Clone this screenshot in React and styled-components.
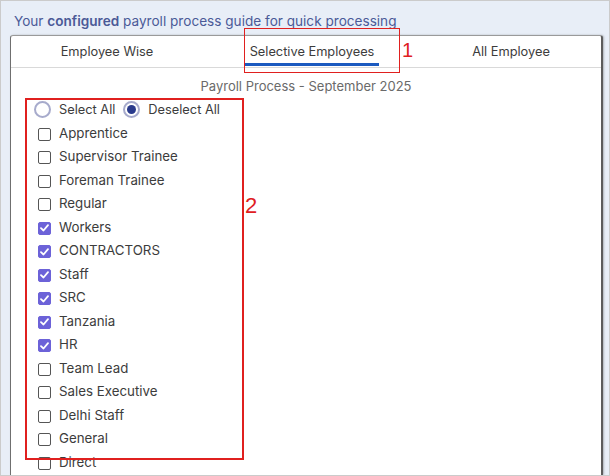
import React from 'react';
import styled, { createGlobalStyle } from 'styled-components';

const GlobalStyle = createGlobalStyle`
  html, body {
    margin: 0;
    padding: 0;
  }
  body {
    font-family: Inter, "Noto Sans", sans-serif;
    background: #e8eef7;
  }
`;

const Frame = styled.div`
  position: relative;
  box-sizing: border-box;
  width: 610px;
  height: 476px;
  border: 1px solid #cbcbcb;
  overflow: hidden;
  padding: 11px 6px 0 9px;
  display: flex;
  flex-direction: column;
`;

const Heading = styled.div`
  font-size: 13.6px;
  color: #4b5a97;
  padding-left: 4px;
  height: 23px;
  line-height: 18px;

  b {
    font-weight: 600;
  }
`;

const Panel = styled.div`
  flex: 1;
  background: #fff;
  border-top: 1px solid #9a9a9a;
  border-left: 1px solid #6f6f6f;
  border-right: 2px solid #5c5c5c;
  border-radius: 3px 3px 0 0;
  box-shadow: 1px 0 2px rgba(0, 0, 0, 0.25);
  display: flex;
  flex-direction: column;
`;

const Tabs = styled.div`
  display: grid;
  grid-template-columns: 192px 218px 1fr;
  height: 31px;
  border-bottom: 1px solid #d9d9d9;
`;

const Tab = styled.div`
  display: flex;
  justify-content: center;
  align-items: flex-end;
  font-size: 12.8px;
  color: #3c3c3c;
`;

const TabLabel = styled.span`
  display: inline-block;
  padding: 0 5px;
  height: 25px;
  line-height: 22px;
  border-bottom: 3px solid ${(p) => (p.$active ? '#1b5ac0' : 'transparent')};
  box-sizing: border-box;
  margin-bottom: 1px;
`;

const Body = styled.div`
  display: flex;
  flex-direction: column;
  padding: 9px 0 0 27px;
`;

const Title = styled.div`
  text-align: center;
  font-size: 13px;
  color: #6a6a6a;
  margin-left: -27px;
  height: 20px;
  line-height: 18px;
`;

const RadioRow = styled.div`
  display: flex;
  align-items: center;
  gap: 8px;
  height: 24px;
  margin-left: -4px;
`;

const RadioOption = styled.label`
  display: flex;
  align-items: center;
  gap: 8px;
  font-size: 12.8px;
  color: #3c3c3c;
`;

const RadioCircle = styled.span`
  width: 17px;
  height: 17px;
  box-sizing: border-box;
  border-radius: 50%;
  border: 2px solid #a7abcc;
  display: flex;
  align-items: center;
  justify-content: center;

  &::after {
    content: '';
    width: 9px;
    height: 9px;
    border-radius: 50%;
    background: ${(p) => (p.$on ? '#2a3b8c' : 'transparent')};
  }
`;

const List = styled.div`
  display: flex;
  flex-direction: column;
`;

const Row = styled.label`
  display: flex;
  align-items: center;
  gap: 8px;
  height: 23.5px;
  font-size: 13.3px;
  color: #3c3c3c;
`;

const Box = styled.span`
  width: 13px;
  height: 13px;
  box-sizing: border-box;
  border-radius: 2px;
  border: 1px solid ${(p) => (p.$on ? '#6c62d8' : '#555')};
  background: ${(p) => (p.$on ? '#6c62d8' : '#fff')};
  display: flex;
  align-items: center;
  justify-content: center;
  margin-top: 3px;
`;

const Mark = styled.span`
  position: absolute;
  border: ${(p) => p.$w || 1}px solid #e0201f;
  box-sizing: border-box;
  pointer-events: none;
`;

const MarkNum = styled.span`
  position: absolute;
  color: #e0201f;
  font-family: "Liberation Sans", Arial, sans-serif;
  font-size: ${(p) => p.$size}px;
  line-height: 1;
`;

const items = [
  ['Apprentice', false],
  ['Supervisor Trainee', false],
  ['Foreman Trainee', false],
  ['Regular', false],
  ['Workers', true],
  ['CONTRACTORS', true],
  ['Staff', true],
  ['SRC', true],
  ['Tanzania', true],
  ['HR', true],
  ['Team Lead', false],
  ['Sales Executive', false],
  ['Delhi Staff', false],
  ['General', false],
  ['Direct', false],
];

const Check = () => (
  <svg width="9" height="8" viewBox="0 0 9 8">
    <path d="M1 4.2 L3.5 6.5 L8 1.2" fill="none" stroke="#fff" strokeWidth="1.8" strokeLinecap="round" strokeLinejoin="round" />
  </svg>
);

export default function App() {
  return (
    <Frame>
      <GlobalStyle />
      <Heading>
        Your <b>configured</b> payroll process guide for quick processing
      </Heading>
      <Panel>
        <Tabs>
          <Tab><TabLabel>Employee Wise</TabLabel></Tab>
          <Tab><TabLabel $active>Selective Employees</TabLabel></Tab>
          <Tab><TabLabel>All Employee</TabLabel></Tab>
        </Tabs>
        <Body>
          <Title>Payroll Process - September 2025</Title>
          <RadioRow>
            <RadioOption><RadioCircle />Select All</RadioOption>
            <RadioOption><RadioCircle $on />Deselect All</RadioOption>
          </RadioRow>
          <List>
            {items.map(([name, on]) => (
              <Row key={name}>
                <Box $on={on}>{on && <Check />}</Box>
                {name}
              </Row>
            ))}
          </List>
        </Body>
      </Panel>

      <Mark style={{ left: 243, top: 27, width: 156, height: 45 }} />
      <MarkNum $size={20} style={{ left: 401, top: 39 }}>1</MarkNum>
      <Mark $w={2} style={{ left: 24, top: 97, width: 219, height: 362 }} />
      <MarkNum $size={22} style={{ left: 244, top: 194 }}>2</MarkNum>
    </Frame>
  );
}
